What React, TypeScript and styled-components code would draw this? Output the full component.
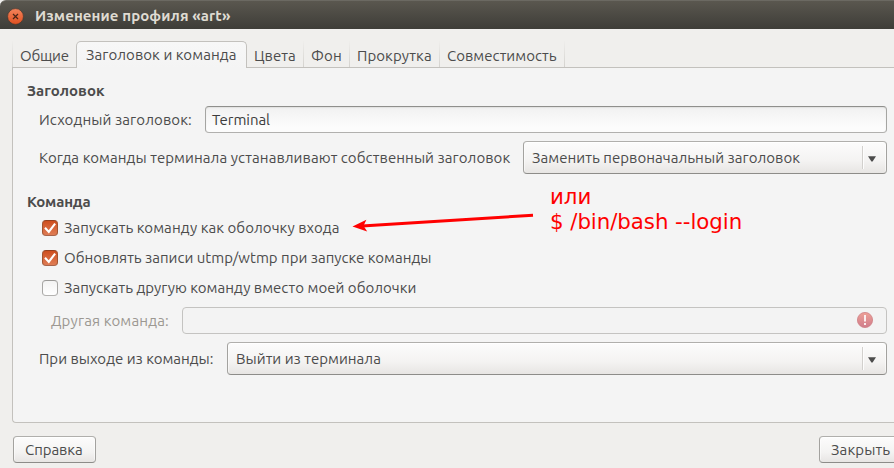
import React from 'react';
import styled, { createGlobalStyle, css } from 'styled-components';

const GlobalStyle = createGlobalStyle`
  * { box-sizing: border-box; }
  body {
    margin: 0;
    overflow: hidden;
    background: #efeeec;
    color: #4c4c4c;
    font: 15px/20px "Ubuntu", "Noto Sans", sans-serif;
  }
`;

const Window = styled.div`
  width: 894px;
  height: 468px;
  overflow: hidden;
  display: flex;
  flex-direction: column;
  background: #f0efed;
`;

const TitleBar = styled.header`
  flex: none;
  height: 29px;
  padding: 2px 0 0 7px;
  display: flex;
  align-items: center;
  gap: 11px;
  background: linear-gradient(#5a574f, #3e3d38);
  border-top: 1px solid #6b6962;
  border-top-left-radius: 6px;
`;

const Title = styled.h1`
  margin: 0;
  font-size: 15px;
  line-height: 20px;
  font-weight: 700;
  letter-spacing: 0.1px;
  color: #dfdbd2;
`;

const Text = styled.span<{ $track?: number }>`
  white-space: nowrap;
  letter-spacing: ${(p) => p.$track ?? 0}px;
`;

const TabBar = styled.nav`
  flex: none;
  height: 39px;
  padding: 12px 0 0 12px;
  display: flex;
  align-items: stretch;
  position: relative;
  z-index: 1;
`;

const Tab = styled.div<{ $width: number; $active?: boolean; $first?: boolean }>`
  flex: none;
  width: ${(p) => p.$width}px;
  padding: 5px 0 0 7px;
  margin-bottom: 1px;
  ${(p) =>
    p.$active
      ? css`
          margin-bottom: 0;
          padding: 3px 0 0 9px;
          border: 1px solid #c3c1bd;
          border-bottom: 0;
          border-radius: 5px 5px 0 0;
          background: linear-gradient(#f7f7f7, #f4f4f4);
        `
      : css`
          border-right: ${p.$first ? 0 : 1}px solid;
          border-left: ${p.$first ? 1 : 0}px solid;
          border-image: linear-gradient(#d9d7d300, #d3d1cd) 1;
        `}
`;

const Panel = styled.main`
  flex: none;
  height: 356px;
  margin: -1px 0 0 12px;
  padding: 13px 7px 0 14px;
  display: flex;
  flex-direction: column;
  background: #f4f4f4;
  border: 1px solid #c3c1bd;
  border-right: 0;
  border-bottom-left-radius: 4px;
`;

const Heading = styled.h2<{ $track: number }>`
  margin: 0;
  font-size: 15px;
  line-height: 20px;
  font-weight: 700;
  letter-spacing: ${(p) => p.$track}px;
`;

const Row = styled.div<{ $height: number; $top: number; $indent?: number; $gap?: number }>`
  flex: none;
  height: ${(p) => p.$height}px;
  margin-top: ${(p) => p.$top}px;
  padding-left: ${(p) => p.$indent ?? 12}px;
  display: flex;
  align-items: center;
  gap: ${(p) => p.$gap ?? 0}px;
`;

const FieldLabel = styled(Text)<{ $width: number; $dim?: boolean }>`
  flex: none;
  width: ${(p) => p.$width}px;
  color: ${(p) => (p.$dim ? '#9c9892' : 'inherit')};
`;

const Entry = styled.div<{ $disabled?: boolean }>`
  flex: 1;
  height: 27px;
  padding: 0 13px 0 6px;
  display: flex;
  align-items: center;
  border-radius: 4px;
  border: 1px solid;
  color: #3c3c3c;
  ${(p) =>
    p.$disabled
      ? css`
          justify-content: flex-end;
          padding-bottom: 1px;
          border-color: #c4c3c1;
          background: #f3f3f3;
        `
      : css`
          border-color: #8f8f8c #a5a5a2 #b1b0ae;
          background: linear-gradient(#f1f1f1, #fcfcfc 80%);
          box-shadow: inset 0 1px 1px #e2e2e0;
        `}
`;

const raised = css`
  border: 1px solid;
  border-color: #b0afac #a3a29f #8d8c89;
  border-radius: 4px;
  background: linear-gradient(#fcfcfc, #f4f3f2 60%, #e7e5e3);
  box-shadow: inset 0 1px 0 #ffffff, inset 1px 0 0 #ffffff80, inset -1px 0 0 #ffffff80;
`;

const Combo = styled.div`
  ${raised}
  flex: 1;
  height: 33px;
  padding: 0 10px 0 8px;
  display: flex;
  align-items: center;
`;

const ComboArrow = styled.span`
  margin-left: auto;
  height: 23px;
  padding: 2px 0 0 5px;
  display: flex;
  align-items: center;
  border-left: 1px solid #d2d0cd;
  box-shadow: inset 1px 0 0 #fdfdfd;
`;

const CheckBox = styled.span<{ $checked?: boolean }>`
  flex: none;
  width: 16px;
  height: 16px;
  border-radius: 4px;
  border: 1px solid;
  display: flex;
  ${(p) =>
    p.$checked
      ? css`
          border-color: #94401f #a0532f #a8644a;
          background: linear-gradient(#cf4f1f, #df7d55);
        `
      : css`
          border-color: #9a9997 #a8a7a5 #b3b2b0;
          background: linear-gradient(#f3f3f3, #ffffff);
        `}
`;

const Footer = styled.footer`
  flex: none;
  margin-right: -8px;
  padding: 13px 0 0 13px;
  display: flex;
  justify-content: space-between;
`;

const Button = styled.button<{ $width: number }>`
  ${raised}
  flex: none;
  width: ${(p) => p.$width}px;
  height: 27px;
  padding: 0 0 0 11px;
  text-align: left;
  font: inherit;
  color: #4c4c4c;
`;

const Annotation = styled.div`
  position: absolute;
  left: 352px;
  top: 184px;
  display: flex;
  color: #ff0000;
`;

const Note = styled.p`
  margin: 0 0 0 16px;
  white-space: pre;
  font: 21.33px/25px "DejaVu Sans", sans-serif;
  letter-spacing: -0.05px;
`;

const CloseIcon = () => (
  <svg width="17" height="17" viewBox="0 0 17 17">
    <defs>
      <linearGradient id="close" x1="0" y1="0" x2="0" y2="1">
        <stop offset="0" stopColor="#f4845c" />
        <stop offset="1" stopColor="#e05020" />
      </linearGradient>
    </defs>
    <circle cx="8.5" cy="8.5" r="7.9" fill="url(#close)" stroke="#3a332c" strokeWidth=".6" />
    <path d="M6 6l5 5M11 6l-5 5" stroke="#4a2416" strokeWidth="1.2" />
  </svg>
);

const Tick = () => (
  <svg width="14" height="14" viewBox="0 0 14 14">
    <path d="M2 6.8l3.8 4.1 6.3-8.3" fill="none" stroke="#fff" strokeWidth="2.1" />
  </svg>
);

const DownArrow = () => (
  <svg width="8" height="6" viewBox="0 0 8 6">
    <path d="M0 .3h8L4.6 5.6H3.4z" fill="#4c4c4c" />
  </svg>
);

const ErrorIcon = () => (
  <svg width="16" height="16" viewBox="0 0 16 16">
    <defs>
      <linearGradient id="err" x1="0" y1="0" x2="0" y2="1">
        <stop offset="0" stopColor="#eea096" />
        <stop offset="1" stopColor="#cf7d8c" />
      </linearGradient>
    </defs>
    <circle cx="8" cy="8" r="7.6" fill="url(#err)" stroke="#cf8085" strokeWidth=".8" />
    <path d="M7 3h2v6.5H7zM7 11h2v2H7z" fill="#fbeeee" />
  </svg>
);

const Arrow = () => (
  <svg width="182" height="50" viewBox="0 0 182 50">
    <path d="M181 31.3L10 42" stroke="#f00" strokeWidth="3" />
    <path d="M.5 42.5L14.4 35.8 11.5 41.8 15.2 47.4z" fill="#f00" />
  </svg>
);

const tabs = [
  { label: 'Общие', width: 64, track: -0.2, first: true },
  { label: 'Заголовок и команда', width: 171, track: 0.07, active: true },
  { label: 'Цвета', width: 57, track: 0.05 },
  { label: 'Фон', width: 46, track: 0.1 },
  { label: 'Прокрутка', width: 90, track: 0.07 },
  { label: 'Совместимость', width: 125, track: 0.01 },
];

const checks = [
  { label: 'Запускать команду как оболочку входа', track: 0.06, checked: true, top: 1 },
  { label: 'Обновлять записи utmp/wtmp при запуске команды', track: 0.01, checked: true, top: 0 },
  { label: 'Запускать другую команду вместо моей оболочки', track: 0.02, checked: false, top: 0 },
];

export default function App() {
  return (
    <>
      <GlobalStyle />
      <Window>
        <TitleBar>
          <CloseIcon />
          <Title>Изменение профиля «art»</Title>
        </TitleBar>
        <TabBar>
          {tabs.map((t) => (
            <Tab key={t.label} $width={t.width} $active={t.active} $first={t.first}>
              <Text $track={t.track}>{t.label}</Text>
            </Tab>
          ))}
        </TabBar>
        <Panel>
          <Heading $track={0.01}>Заголовок</Heading>
          <Row $height={27} $top={5}>
            <FieldLabel $width={166} $track={0.1}>Исходный заголовок:</FieldLabel>
            <Entry><Text $track={-0.05}>Terminal</Text></Entry>
          </Row>
          <Row $height={33} $top={8}>
            <FieldLabel $width={484} $track={0.07}>
              Когда команды терминала устанавливают собственный заголовок
            </FieldLabel>
            <Combo>
              <Text $track={0.05}>Заменить первоначальный заголовок</Text>
              <ComboArrow><DownArrow /></ComboArrow>
            </Combo>
          </Row>
          <Row $height={20} $top={18} $indent={0}>
            <Heading $track={-0.2}>Команда</Heading>
          </Row>
          {checks.map((c) => (
            <Row key={c.label} $height={30} $top={c.top} $indent={15} $gap={6}>
              <CheckBox $checked={c.checked}>{c.checked && <Tick />}</CheckBox>
              <Text $track={c.track}>{c.label}</Text>
            </Row>
          ))}
          <Row $height={27} $top={4} $indent={24}>
            <FieldLabel $width={131} $track={0.16} $dim>Другая команда:</FieldLabel>
            <Entry $disabled><ErrorIcon /></Entry>
          </Row>
          <Row $height={33} $top={8}>
            <FieldLabel $width={188} $track={0.01}>При выходе из команды:</FieldLabel>
            <Combo>
              <Text $track={0.02}>Выйти из терминала</Text>
              <ComboArrow><DownArrow /></ComboArrow>
            </Combo>
          </Row>
        </Panel>
        <Footer>
          <Button $width={83}><Text $track={-0.05}>Справка</Text></Button>
          <Button $width={83}><Text $track={0.15}>Закрыть</Text></Button>
        </Footer>
      </Window>
      <Annotation>
        <Arrow />
        <Note>{'или\n$ /bin/bash --login'}</Note>
      </Annotation>
    </>
  );
}
